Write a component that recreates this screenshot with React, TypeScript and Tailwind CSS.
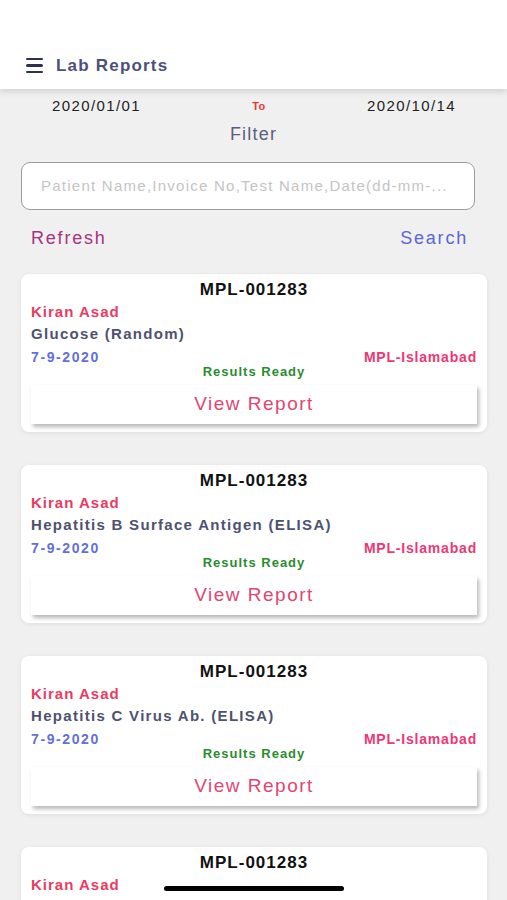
import React from "react";

const tests = [
  "Glucose (Random)",
  "Hepatitis B Surface Antigen (ELISA)",
  "Hepatitis C Virus Ab. (ELISA)",
  "Glucose (Random)",
];

function Card({ test }: { test: string }) {
  return (
    <div className="bg-white rounded-[8px] shadow-[0_1px_4px_rgba(0,0,0,0.08)] px-[10px] pt-[5px] pb-[8px]">
      <div className="h-[22px] flex items-center justify-center text-[17px] font-bold tracking-[1px] text-[#111]">
        MPL-001283
      </div>
      <div className="h-[22px] flex items-center text-[15px] font-bold tracking-[1px] text-[#ec3a5f]">
        Kiran Asad
      </div>
      <div className="h-[23px] flex items-center text-[15px] font-bold tracking-[1.3px] text-[#4d5272] whitespace-nowrap">
        {test}
      </div>
      <div className="h-[22px] flex items-center justify-between text-[14px] font-bold tracking-[1px]">
        <span className="text-[#6270d8] tracking-[1.6px]">7-9-2020</span>
        <span className="text-[#ee3775] tracking-[0.8px]">MPL-Islamabad</span>
      </div>
      <div className="h-[12px] -mt-[2px] flex items-center justify-center text-[13px] font-bold tracking-[1px] text-[#2a8c2e]">
        Results Ready
      </div>
      <div className="mt-[7px] h-[39px] bg-white flex items-center justify-center shadow-[2px_3px_4px_rgba(0,0,0,0.28)] text-[19px] tracking-[1.5px] text-[#e2456f]">
        View Report
      </div>
    </div>
  );
}

export default function App() {
  return (
    <div
      className="relative h-[900px] overflow-hidden bg-[#f0f0f0]"
      style={{ fontFamily: '"Liberation Sans", Arial, sans-serif' }}
    >
      <div className="relative z-10 h-[89px] bg-white shadow-[0_3px_6px_rgba(0,0,0,0.12)] flex items-end pb-[14px] pl-[26px]">
        <div className="flex items-center gap-[13px] translate-y-[3px]">
          <div className="flex flex-col gap-[4px] w-[17px]">
            <div className="h-[2.5px] bg-[#2d3252] rounded-full" />
            <div className="h-[2.5px] bg-[#2d3252] rounded-full" />
            <div className="h-[2.5px] bg-[#2d3252] rounded-full" />
          </div>
          <span className="text-[17px] font-bold tracking-[1.2px] text-[#4b5178]">Lab Reports</span>
        </div>
      </div>

      <div className="h-[34px] flex items-center justify-between pl-[52px] pr-[51px] pt-[1px]">
        <span className="text-[15px] tracking-[1.4px] text-[#222]">2020/01/01</span>
        <span className="text-[11px] font-bold tracking-[0.5px] text-[#e53935] pl-[10px]">To</span>
        <span className="text-[15px] tracking-[1.4px] text-[#222]">2020/10/14</span>
      </div>
      <div className="h-[22px] flex items-center justify-center text-[18px] tracking-[1.2px] text-[#5a5f7e]">
        Filter
      </div>

      <div className="mt-[17px] mx-[21px] w-[454px] h-[48px] rounded-[9px] border border-[#9c9c9c] bg-white flex items-center pl-[19px] overflow-hidden">
        <span className="text-[15px] tracking-[1.25px] text-[#c4c4c4] whitespace-nowrap">
          Patient Name,Invoice No,Test Name,Date(dd-mm-...
        </span>
      </div>

      <div className="mt-[16px] h-[24px] flex items-center justify-between pl-[31px] pr-[39px] text-[18px] tracking-[1.8px]">
        <span className="text-[#a8327f]">Refresh</span>
        <span className="text-[#5b67d3]">Search</span>
      </div>

      <div className="mt-[24px] mx-[21px] w-[466px] flex flex-col gap-[33px]">
        {tests.map((t, i) => (
          <Card key={i} test={t} />
        ))}
      </div>

      <div className="absolute left-[164px] top-[886px] w-[180px] h-[5px] rounded-full bg-black" />
    </div>
  );
}
